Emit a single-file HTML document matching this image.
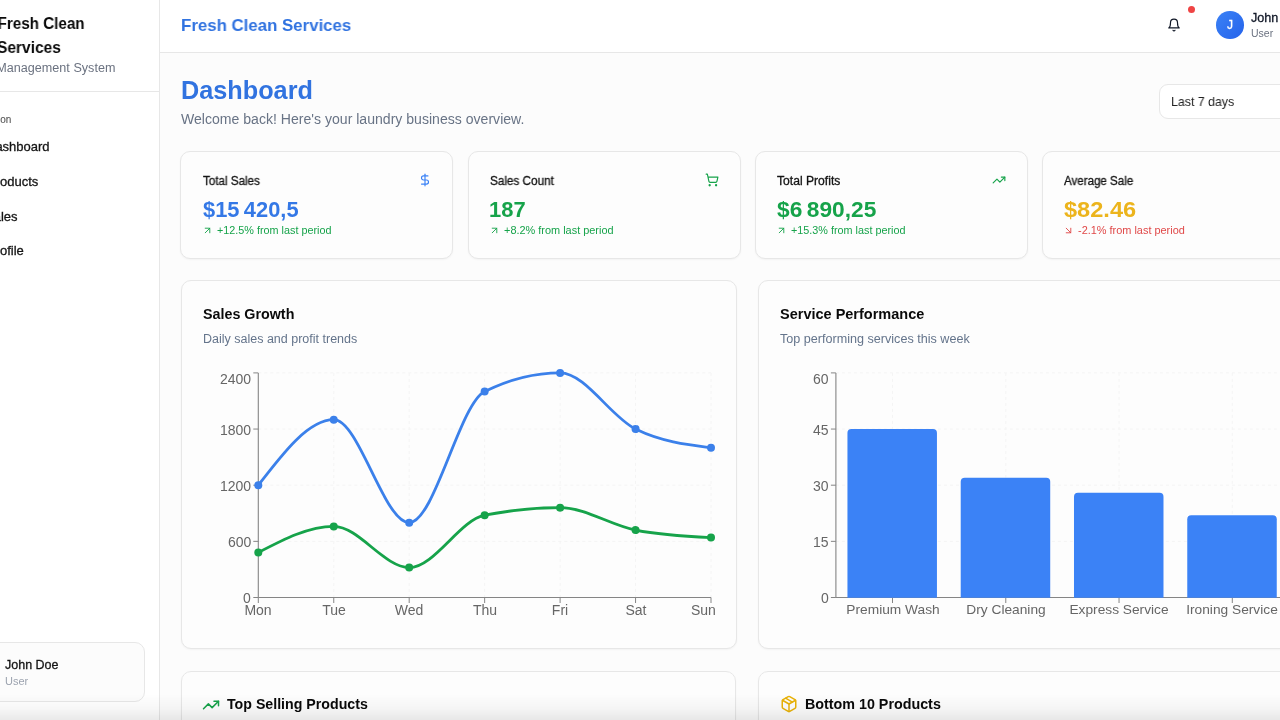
<!DOCTYPE html><html><head><meta charset="utf-8"><title>Dashboard</title><style>
*{margin:0;padding:0;box-sizing:border-box}
html,body{width:1280px;height:720px;overflow:hidden;background:#fcfcfc;font-family:"Liberation Sans",sans-serif}
.t{position:absolute;white-space:nowrap;line-height:1;will-change:transform}
.card{position:absolute;background:#fdfdfd;border:1px solid #e7e7e7;border-radius:10px;box-shadow:0 1px 2px rgba(0,0,0,0.04)}
svg{position:absolute;overflow:visible}
</style></head><body>
<div style="position:absolute;left:0px;top:0px;width:159px;height:720px;background:#fff;"></div>
<div style="position:absolute;left:159px;top:0px;width:1px;height:720px;background:#e7e7e7;"></div>
<div style="position:absolute;left:0px;top:91px;width:159px;height:1px;background:#e7e7e7;"></div>
<div class="t" style="right:1195.5px;transform-origin:100% 0;transform: scaleX(0.95);top:16.46px;font-size:16px;color:#0a0a0a;font-weight:700;">Fresh Clean</div>
<div class="t" style="right:1219.2px;transform-origin:100% 0;transform: scaleX(0.97);top:40.26px;font-size:16px;color:#0a0a0a;font-weight:700;">Services</div>
<div class="t" style="right:1164.7px;transform-origin:100% 0;transform: scaleX(1.05);top:62.34px;font-size:12px;color:#6b7280;font-weight:400;">Management System</div>
<div class="t" style="right:1268.8px;top:114.83px;font-size:10px;color:#555555;font-weight:400;-webkit-text-stroke:0.1px currentColor;">Navigation</div>
<div class="t" style="right:1230.7px;top:140.00px;font-size:13px;color:#141414;font-weight:400;-webkit-text-stroke:0.3px currentColor;">Dashboard</div>
<div class="t" style="right:1241.5px;top:175.00px;font-size:13px;color:#141414;font-weight:400;-webkit-text-stroke:0.3px currentColor;">Products</div>
<div class="t" style="right:1262px;top:209.80px;font-size:13px;color:#141414;font-weight:400;-webkit-text-stroke:0.3px currentColor;">Sales</div>
<div class="t" style="right:1256.5px;top:243.50px;font-size:13px;color:#141414;font-weight:400;-webkit-text-stroke:0.3px currentColor;">Profile</div>
<div class="card" style="left:-20px;top:642px;width:165px;height:60px;border-radius:10px;background:#fcfcfc;box-shadow:none"></div>
<div class="t" style="left:5px;top:659.42px;font-size:12.5px;color:#141414;font-weight:400;-webkit-text-stroke:0.3px currentColor;">John Doe</div>
<div class="t" style="left:5px;top:675.69px;font-size:11px;color:#9ca3af;font-weight:400;">User</div>
<div style="position:absolute;left:160px;top:0px;width:1120px;height:52px;background:#fff;"></div>
<div style="position:absolute;left:160px;top:52px;width:1120px;height:1px;background:#e7e7e7;"></div>
<div class="t" style="left:180.5px;transform-origin:0 0;transform: scaleX(0.99);top:16.91px;font-size:17px;color:#3173e0;font-weight:700;">Fresh Clean Services</div>
<svg style="left:1167px;top:17.7px" width="14" height="14" viewBox="0 0 24 24" fill="none" stroke="#111827" stroke-width="2" stroke-linecap="round" stroke-linejoin="round"><path d="M6 8a6 6 0 0 1 12 0c0 7 3 9 3 9H3s3-2 3-9"/><path d="M10.3 21a1.94 1.94 0 0 0 3.4 0"/></svg>
<div style="position:absolute;left:1188px;top:5.6px;width:7px;height:7px;background:#ef4444;border-radius:50%;"></div>
<div style="position:absolute;left:1216px;top:11px;width:27.5px;height:27.5px;background:linear-gradient(135deg,#3b82f6,#2563eb);border-radius:50%;"></div>
<div class="t" style="left:1229.7px;transform:translateX(-50%);top:19.34px;font-size:12px;color:#fff;font-weight:400;-webkit-text-stroke:0.3px currentColor;">J</div>
<div class="t" style="left:1251px;transform-origin:0 0;transform: scaleX(1.05);top:11.84px;font-size:12px;color:#111827;font-weight:400;-webkit-text-stroke:0.3px currentColor;">John</div>
<div class="t" style="left:1251px;top:28.31px;font-size:10.5px;color:#6b7280;font-weight:400;">User</div>
<div class="t" style="left:180.5px;transform-origin:0 0;transform: scaleX(1.01);top:77.84px;font-size:25px;color:#3173e0;font-weight:700;">Dashboard</div>
<div class="t" style="left:180.5px;transform-origin:0 0;transform: scaleX(1.005);top:112.15px;font-size:14px;color:#687385;font-weight:400;">Welcome back! Here's your laundry business overview.</div>
<div class="card" style="left:1159px;top:84px;width:160px;height:35px;border-radius:9px;box-shadow:none;background:#fff"></div>
<div class="t" style="left:1170.5px;transform-origin:0 0;transform: scaleX(0.95);top:95.00px;font-size:13px;color:#222;font-weight:400;">Last 7 days</div>
<div class="card" style="left:180.4px;top:150.5px;width:272.9px;height:108.2px"></div>
<div class="t" style="left:203px;transform-origin:0 0;transform: scaleX(0.968);top:174.74px;font-size:12px;color:#141414;font-weight:400;-webkit-text-stroke:0.3px currentColor;">Total Sales</div>
<div class="t" style="left:202.5px;transform-origin:0 0;transform: scaleX(1.017);top:200.00px;font-size:21.5px;color:#3478e6;font-weight:700;">$15&#8201;420,5</div>
<svg style="left:202px;top:224.6px" width="11" height="11" viewBox="0 0 24 24" fill="none" stroke="#16a34a" stroke-width="2" stroke-linecap="round" stroke-linejoin="round"><path d="M7 7h10v10"/><path d="M7 17 17 7"/></svg>
<div class="t" style="left:216.5px;transform-origin:0 0;transform: scaleX(1.0296);top:225.01px;font-size:10.5px;color:#16a34a;font-weight:400;">+12.5% from last period</div>
<svg style="left:418px;top:173px" width="14" height="14" viewBox="0 0 24 24" fill="none" stroke="#3b82f6" stroke-width="2" stroke-linecap="round" stroke-linejoin="round"><line x1="12" x2="12" y1="2" y2="22"/><path d="M17 5H9.5a3.5 3.5 0 0 0 0 7h5a3.5 3.5 0 0 1 0 7H6"/></svg>
<div class="card" style="left:467.8px;top:150.5px;width:272.9px;height:108.2px"></div>
<div class="t" style="left:490px;transform-origin:0 0;transform: scaleX(0.977);top:174.74px;font-size:12px;color:#141414;font-weight:400;-webkit-text-stroke:0.3px currentColor;">Sales Count</div>
<div class="t" style="left:488.5px;transform-origin:0 0;transform: scaleX(1.02);top:200.00px;font-size:21.5px;color:#16a34a;font-weight:700;">187</div>
<svg style="left:489px;top:224.6px" width="11" height="11" viewBox="0 0 24 24" fill="none" stroke="#16a34a" stroke-width="2" stroke-linecap="round" stroke-linejoin="round"><path d="M7 7h10v10"/><path d="M7 17 17 7"/></svg>
<div class="t" style="left:503.5px;transform-origin:0 0;transform: scaleX(1.04);top:225.01px;font-size:10.5px;color:#16a34a;font-weight:400;">+8.2% from last period</div>
<svg style="left:705px;top:173px" width="14" height="14" viewBox="0 0 24 24" fill="none" stroke="#16a34a" stroke-width="2" stroke-linecap="round" stroke-linejoin="round"><circle cx="8" cy="21" r="1"/><circle cx="19" cy="21" r="1"/><path d="M2.05 2.05h2l2.66 12.42a2 2 0 0 0 2 1.58h9.78a2 2 0 0 0 1.95-1.57l1.65-7.43H5.12"/></svg>
<div class="card" style="left:754.9px;top:150.5px;width:272.9px;height:108.2px"></div>
<div class="t" style="left:777px;transform-origin:0 0;transform: scaleX(1.01);top:174.74px;font-size:12px;color:#141414;font-weight:400;-webkit-text-stroke:0.3px currentColor;">Total Profits</div>
<div class="t" style="left:776.5px;transform-origin:0 0;transform: scaleX(1.057);top:200.00px;font-size:21.5px;color:#16a34a;font-weight:700;">$6&#8201;890,25</div>
<svg style="left:776px;top:224.6px" width="11" height="11" viewBox="0 0 24 24" fill="none" stroke="#16a34a" stroke-width="2" stroke-linecap="round" stroke-linejoin="round"><path d="M7 7h10v10"/><path d="M7 17 17 7"/></svg>
<div class="t" style="left:790.5px;transform-origin:0 0;transform: scaleX(1.0296);top:225.01px;font-size:10.5px;color:#16a34a;font-weight:400;">+15.3% from last period</div>
<svg style="left:992px;top:173px" width="14" height="14" viewBox="0 0 24 24" fill="none" stroke="#16a34a" stroke-width="2" stroke-linecap="round" stroke-linejoin="round"><polyline points="22 7 13.5 15.5 8.5 10.5 2 17"/><polyline points="16 7 22 7 22 13"/></svg>
<div class="card" style="left:1042.2px;top:150.5px;width:272.9px;height:108.2px"></div>
<div class="t" style="left:1064px;transform-origin:0 0;transform: scaleX(0.963);top:174.74px;font-size:12px;color:#141414;font-weight:400;-webkit-text-stroke:0.3px currentColor;">Average Sale</div>
<div class="t" style="left:1063.5px;transform-origin:0 0;transform: scaleX(1.097);top:200.00px;font-size:21.5px;color:#ecb41c;font-weight:700;">$82.46</div>
<svg style="left:1063px;top:224.6px" width="11" height="11" viewBox="0 0 24 24" fill="none" stroke="#e04848" stroke-width="2" stroke-linecap="round" stroke-linejoin="round"><path d="m7 7 10 10"/><path d="M17 7v10H7"/></svg>
<div class="t" style="left:1077.5px;transform-origin:0 0;transform: scaleX(1.04);top:225.01px;font-size:10.5px;color:#e04848;font-weight:400;">-2.1% from last period</div>
<div class="card" style="left:180.6px;top:279.6px;width:556px;height:369.4px"></div>
<div class="card" style="left:758.2px;top:279.6px;width:556px;height:369.4px"></div>
<div class="t" style="left:202.5px;top:306.50px;font-size:14.3px;color:#0a0a0a;font-weight:700;">Sales Growth</div>
<div class="t" style="left:202.5px;top:332.82px;font-size:12.5px;color:#64748b;font-weight:400;">Daily sales and profit trends</div>
<div class="t" style="left:780.4px;top:306.73px;font-size:14.5px;color:#0a0a0a;font-weight:700;">Service Performance</div>
<div class="t" style="left:780.4px;top:332.83px;font-size:12.6px;color:#64748b;font-weight:400;">Top performing services this week</div>
<svg style="left:0;top:0" width="1280" height="720">
<line x1="258.3" x2="711.0" y1="541.35" y2="541.35" stroke="#f4f4f4" stroke-dasharray="3 3"/>
<line x1="258.3" x2="711.0" y1="485.20" y2="485.20" stroke="#f4f4f4" stroke-dasharray="3 3"/>
<line x1="258.3" x2="711.0" y1="429.05" y2="429.05" stroke="#f4f4f4" stroke-dasharray="3 3"/>
<line x1="258.3" x2="711.0" y1="372.90" y2="372.90" stroke="#f4f4f4" stroke-dasharray="3 3"/>
<line x1="333.75" x2="333.75" y1="372.9" y2="597.5" stroke="#f4f4f4" stroke-dasharray="3 3"/>
<line x1="409.20000000000005" x2="409.20000000000005" y1="372.9" y2="597.5" stroke="#f4f4f4" stroke-dasharray="3 3"/>
<line x1="484.65000000000003" x2="484.65000000000003" y1="372.9" y2="597.5" stroke="#f4f4f4" stroke-dasharray="3 3"/>
<line x1="560.1" x2="560.1" y1="372.9" y2="597.5" stroke="#f4f4f4" stroke-dasharray="3 3"/>
<line x1="635.55" x2="635.55" y1="372.9" y2="597.5" stroke="#f4f4f4" stroke-dasharray="3 3"/>
<line x1="711.0" x2="711.0" y1="372.9" y2="597.5" stroke="#f4f4f4" stroke-dasharray="3 3"/>
<line x1="258.3" x2="258.3" y1="372.9" y2="597.5" stroke="#858585" stroke-width="1.1"/>
<line x1="258.3" x2="711.0" y1="597.5" y2="597.5" stroke="#858585" stroke-width="1.1"/>
<line x1="253.3" x2="258.3" y1="597.50" y2="597.50" stroke="#858585"/>
<line x1="253.3" x2="258.3" y1="541.35" y2="541.35" stroke="#858585"/>
<line x1="253.3" x2="258.3" y1="485.20" y2="485.20" stroke="#858585"/>
<line x1="253.3" x2="258.3" y1="429.05" y2="429.05" stroke="#858585"/>
<line x1="253.3" x2="258.3" y1="372.90" y2="372.90" stroke="#858585"/>
<line x1="258.30" x2="258.30" y1="597.5" y2="603.0" stroke="#858585"/>
<line x1="333.75" x2="333.75" y1="597.5" y2="603.0" stroke="#858585"/>
<line x1="409.20" x2="409.20" y1="597.5" y2="603.0" stroke="#858585"/>
<line x1="484.65" x2="484.65" y1="597.5" y2="603.0" stroke="#858585"/>
<line x1="560.10" x2="560.10" y1="597.5" y2="603.0" stroke="#858585"/>
<line x1="635.55" x2="635.55" y1="597.5" y2="603.0" stroke="#858585"/>
<line x1="711.00" x2="711.00" y1="597.5" y2="603.0" stroke="#858585"/>
<path d="M258.30,485.20C283.45,452.45,308.60,419.69,333.75,419.69C358.90,419.69,384.05,522.63,409.20,522.63C434.35,522.63,459.50,404.09,484.65,391.62C509.80,379.14,534.95,372.90,560.10,372.90C585.25,372.90,610.40,416.57,635.55,429.05C660.70,441.53,685.85,444.65,711.00,447.77" fill="none" stroke="#3b80ea" stroke-width="2.8"/>
<path d="M258.30,552.58C283.45,539.48,308.60,526.38,333.75,526.38C358.90,526.38,384.05,567.55,409.20,567.55C434.35,567.55,459.50,520.14,484.65,515.15C509.80,510.16,534.95,507.66,560.10,507.66C585.25,507.66,610.40,525.13,635.55,530.12C660.70,535.11,685.85,536.36,711.00,537.61" fill="none" stroke="#16a34a" stroke-width="2.8"/>
<circle cx="258.30" cy="485.20" r="4" fill="#3b80ea"/>
<circle cx="333.75" cy="419.69" r="4" fill="#3b80ea"/>
<circle cx="409.20" cy="522.63" r="4" fill="#3b80ea"/>
<circle cx="484.65" cy="391.62" r="4" fill="#3b80ea"/>
<circle cx="560.10" cy="372.90" r="4" fill="#3b80ea"/>
<circle cx="635.55" cy="429.05" r="4" fill="#3b80ea"/>
<circle cx="711.00" cy="447.77" r="4" fill="#3b80ea"/>
<circle cx="258.30" cy="552.58" r="4" fill="#16a34a"/>
<circle cx="333.75" cy="526.38" r="4" fill="#16a34a"/>
<circle cx="409.20" cy="567.55" r="4" fill="#16a34a"/>
<circle cx="484.65" cy="515.15" r="4" fill="#16a34a"/>
<circle cx="560.10" cy="507.66" r="4" fill="#16a34a"/>
<circle cx="635.55" cy="530.12" r="4" fill="#16a34a"/>
<circle cx="711.00" cy="537.61" r="4" fill="#16a34a"/>
<line x1="835.9" x2="1290" y1="541.35" y2="541.35" stroke="#f4f4f4" stroke-dasharray="3 3"/>
<line x1="835.9" x2="1290" y1="485.20" y2="485.20" stroke="#f4f4f4" stroke-dasharray="3 3"/>
<line x1="835.9" x2="1290" y1="429.05" y2="429.05" stroke="#f4f4f4" stroke-dasharray="3 3"/>
<line x1="835.9" x2="1290" y1="372.90" y2="372.90" stroke="#f4f4f4" stroke-dasharray="3 3"/>
<line x1="892.50" x2="892.50" y1="372.9" y2="597.5" stroke="#f4f4f4" stroke-dasharray="3 3"/>
<line x1="1005.77" x2="1005.77" y1="372.9" y2="597.5" stroke="#f4f4f4" stroke-dasharray="3 3"/>
<line x1="1119.04" x2="1119.04" y1="372.9" y2="597.5" stroke="#f4f4f4" stroke-dasharray="3 3"/>
<line x1="1232.31" x2="1232.31" y1="372.9" y2="597.5" stroke="#f4f4f4" stroke-dasharray="3 3"/>
<line x1="835.9" x2="835.9" y1="372.9" y2="597.5" stroke="#858585" stroke-width="1.1"/>
<line x1="835.9" x2="1290" y1="597.5" y2="597.5" stroke="#858585" stroke-width="1.1"/>
<line x1="830.9" x2="835.9" y1="597.50" y2="597.50" stroke="#858585"/>
<line x1="830.9" x2="835.9" y1="541.35" y2="541.35" stroke="#858585"/>
<line x1="830.9" x2="835.9" y1="485.20" y2="485.20" stroke="#858585"/>
<line x1="830.9" x2="835.9" y1="429.05" y2="429.05" stroke="#858585"/>
<line x1="830.9" x2="835.9" y1="372.90" y2="372.90" stroke="#858585"/>
<line x1="892.50" x2="892.50" y1="597.5" y2="603.0" stroke="#858585"/>
<line x1="1005.77" x2="1005.77" y1="597.5" y2="603.0" stroke="#858585"/>
<line x1="1119.04" x2="1119.04" y1="597.5" y2="603.0" stroke="#858585"/>
<line x1="1232.31" x2="1232.31" y1="597.5" y2="603.0" stroke="#858585"/>
<path d="M847.45,597.8V433.05Q847.45,429.05 851.45,429.05H932.95Q936.95,429.05 936.95,433.05V597.8Z" fill="#3b82f6"/>
<path d="M960.72,597.8V481.71Q960.72,477.71 964.72,477.71H1046.22Q1050.22,477.71 1050.22,481.71V597.8Z" fill="#3b82f6"/>
<path d="M1073.99,597.8V496.69Q1073.99,492.69 1077.99,492.69H1159.49Q1163.49,492.69 1163.49,496.69V597.8Z" fill="#3b82f6"/>
<path d="M1187.26,597.8V519.15Q1187.26,515.15 1191.26,515.15H1272.76Q1276.76,515.15 1276.76,519.15V597.8Z" fill="#3b82f6"/>
</svg>
<div class="t" style="right:1029.0px;top:591.25px;font-size:14px;color:#666666;font-weight:400;">0</div>
<div class="t" style="right:1029.0px;top:535.10px;font-size:14px;color:#666666;font-weight:400;">600</div>
<div class="t" style="right:1029.0px;top:478.95px;font-size:14px;color:#666666;font-weight:400;">1200</div>
<div class="t" style="right:1029.0px;top:422.80px;font-size:14px;color:#666666;font-weight:400;">1800</div>
<div class="t" style="right:1029.0px;top:372.25px;font-size:14px;color:#666666;font-weight:400;">2400</div>
<div class="t" style="left:258.3px;transform:translateX(-50%);top:602.85px;font-size:14px;color:#666666;font-weight:400;">Mon</div>
<div class="t" style="left:333.75px;transform:translateX(-50%);top:602.85px;font-size:14px;color:#666666;font-weight:400;">Tue</div>
<div class="t" style="left:409.20000000000005px;transform:translateX(-50%);top:602.85px;font-size:14px;color:#666666;font-weight:400;">Wed</div>
<div class="t" style="left:484.65000000000003px;transform:translateX(-50%);top:602.85px;font-size:14px;color:#666666;font-weight:400;">Thu</div>
<div class="t" style="left:560.1px;transform:translateX(-50%);top:602.85px;font-size:14px;color:#666666;font-weight:400;">Fri</div>
<div class="t" style="left:635.55px;transform:translateX(-50%);top:602.85px;font-size:14px;color:#666666;font-weight:400;">Sat</div>
<div class="t" style="right:563.7px;top:602.85px;font-size:14px;color:#666666;font-weight:400;">Sun</div>
<div class="t" style="right:451.1px;top:591.25px;font-size:14px;color:#666666;font-weight:400;">0</div>
<div class="t" style="right:451.1px;top:535.10px;font-size:14px;color:#666666;font-weight:400;">15</div>
<div class="t" style="right:451.1px;top:478.95px;font-size:14px;color:#666666;font-weight:400;">30</div>
<div class="t" style="right:451.1px;top:422.80px;font-size:14px;color:#666666;font-weight:400;">45</div>
<div class="t" style="right:451.1px;top:372.25px;font-size:14px;color:#666666;font-weight:400;">60</div>
<div class="t" style="left:892.5px;transform:translateX(-50%) scaleX(1.01);top:603.49px;font-size:13.6px;color:#666666;font-weight:400;">Premium Wash</div>
<div class="t" style="left:1005.77px;transform:translateX(-50%) scaleX(1.01);top:603.49px;font-size:13.6px;color:#666666;font-weight:400;">Dry Cleaning</div>
<div class="t" style="left:1119.04px;transform:translateX(-50%) scaleX(1.01);top:603.49px;font-size:13.6px;color:#666666;font-weight:400;">Express Service</div>
<div class="t" style="left:1232.31px;transform:translateX(-50%) scaleX(1.01);top:603.49px;font-size:13.6px;color:#666666;font-weight:400;">Ironing Service</div>
<div class="card" style="left:181px;top:671px;width:555px;height:200px"></div>
<div class="card" style="left:758px;top:671px;width:555px;height:200px"></div>
<svg style="left:202px;top:696px" width="18" height="18" viewBox="0 0 24 24" fill="none" stroke="#16a34a" stroke-width="2" stroke-linecap="round" stroke-linejoin="round"><polyline points="22 7 13.5 15.5 8.5 10.5 2 17"/><polyline points="16 7 22 7 22 13"/></svg>
<div class="t" style="left:227.1px;top:697.38px;font-size:14.2px;color:#0a0a0a;font-weight:700;">Top Selling Products</div>
<svg style="left:779.5px;top:694.8px" width="18" height="18" viewBox="0 0 24 24" fill="none" stroke="#eab308" stroke-width="2" stroke-linecap="round" stroke-linejoin="round"><path d="m7.5 4.27 9 5.15"/><path d="M21 8a2 2 0 0 0-1-1.73l-7-4a2 2 0 0 0-2 0l-7 4A2 2 0 0 0 3 8v8a2 2 0 0 0 1 1.73l7 4a2 2 0 0 0 2 0l7-4A2 2 0 0 0 21 16Z"/><path d="m3.3 7 8.7 5 8.7-5"/><path d="M12 22V12"/></svg>
<div class="t" style="left:804.9px;top:697.10px;font-size:14.3px;color:#0a0a0a;font-weight:700;">Bottom 10 Products</div>
<div style="position:absolute;left:0px;top:694px;width:1280px;height:26px;background:linear-gradient(180deg,rgba(0,0,0,0) 0%,rgba(0,0,0,0.03) 55%,rgba(0,0,0,0.085) 100%);"></div>
</body></html>
